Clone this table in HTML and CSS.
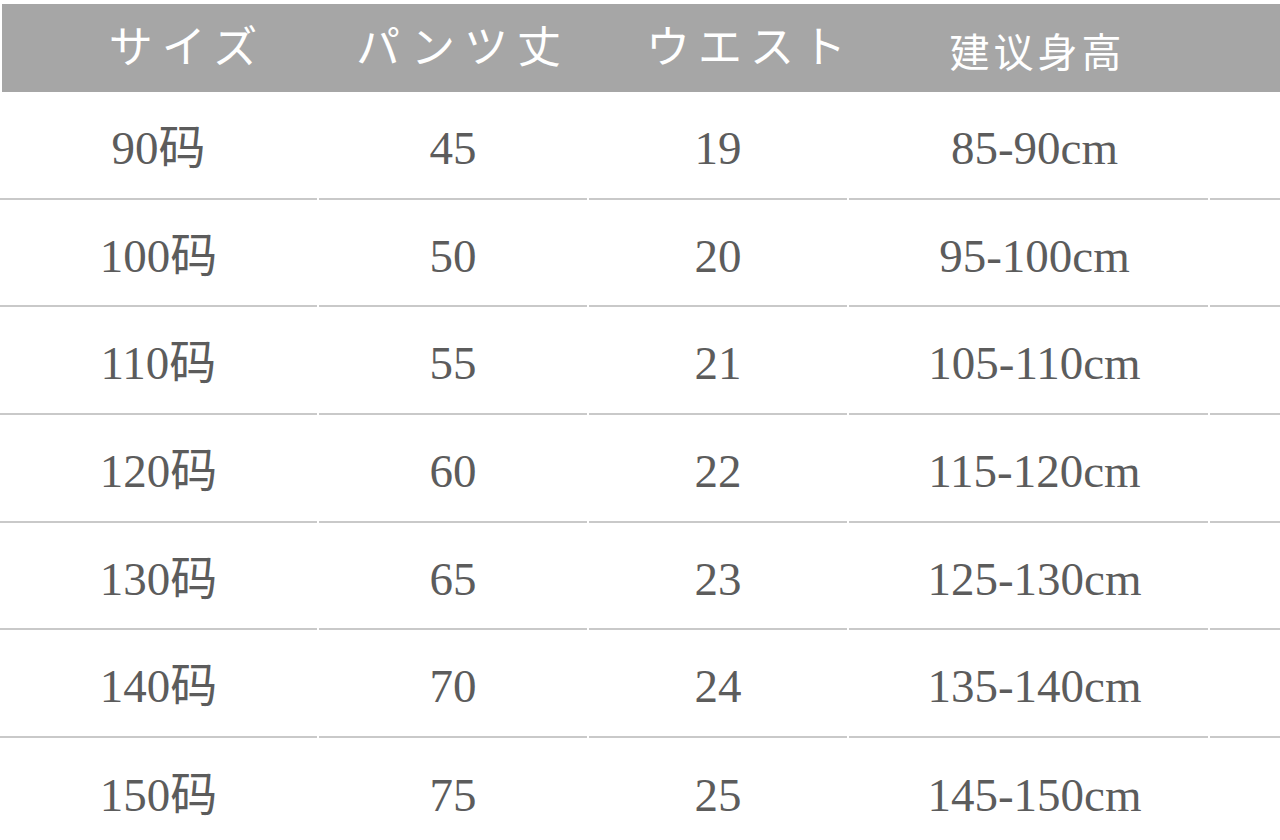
FILE: index.html
```html
<!DOCTYPE html>
<html lang="ja">
<head>
<meta charset="utf-8">
<title>サイズ表</title>
<link rel="stylesheet" href="styles.css">
</head>
<body>
<div class="sheet">
  <div class="head">
    <div class="hcell h-size">サイズ</div>
    <div class="hcell h-len">パンツ丈</div>
    <div class="hcell h-waist">ウエスト</div>
    <div class="hcell h-height">建议身高</div>
    <div class="hcell"></div>
  </div>
  <div class="body">
    <div class="row"><div class="cell">90码</div><div class="cell">45</div><div class="cell">19</div><div class="cell c-h">85-90cm</div><div class="cell"></div></div>
    <div class="row"><div class="cell">100码</div><div class="cell">50</div><div class="cell">20</div><div class="cell c-h">95-100cm</div><div class="cell"></div></div>
    <div class="row"><div class="cell">110码</div><div class="cell">55</div><div class="cell">21</div><div class="cell c-h">105-110cm</div><div class="cell"></div></div>
    <div class="row"><div class="cell">120码</div><div class="cell">60</div><div class="cell">22</div><div class="cell c-h">115-120cm</div><div class="cell"></div></div>
    <div class="row"><div class="cell">130码</div><div class="cell">65</div><div class="cell">23</div><div class="cell c-h">125-130cm</div><div class="cell"></div></div>
    <div class="row"><div class="cell">140码</div><div class="cell">70</div><div class="cell">24</div><div class="cell c-h">135-140cm</div><div class="cell"></div></div>
    <div class="row last"><div class="cell">150码</div><div class="cell">75</div><div class="cell">25</div><div class="cell c-h">145-150cm</div><div class="cell"></div></div>
  </div>
</div>
</body>
</html>
```
FILE: styles.css
```css
html, body {
  margin: 0;
  padding: 0;
  background: #ffffff;
}

body {
  width: 1280px;
  height: 840px;
  overflow: hidden;
}

.sheet {
  display: flex;
  flex-direction: column;
  padding-top: 4px;
}

.head {
  display: grid;
  grid-template-columns: 317px 268px 258px 359px 1fr;
  column-gap: 2px;
  height: 88px;
  margin-left: 2px;
  background: #a6a6a6;
  color: #ffffff;
  font-family: "Noto Sans CJK JP", "Noto Sans CJK SC", sans-serif;
  font-weight: 400;
}

.hcell {
  display: flex;
  align-items: center;
  justify-content: center;
  font-size: 44px;
  line-height: 1;
  white-space: nowrap;
}

.h-size {
  letter-spacing: 9px;
  padding-left: 54px;
  padding-bottom: 8px;
}

.h-len {
  letter-spacing: 9px;
  padding-left: 16px;
  padding-bottom: 8px;
}

.h-waist {
  letter-spacing: 8px;
  padding-left: 60px;
  padding-bottom: 8px;
}

.h-height {
  font-size: 40px;
  letter-spacing: 4px;
  padding-left: 14px;
  padding-top: 4px;
}

.body {
  display: flex;
  flex-direction: column;
}

.row {
  display: grid;
  grid-template-columns: 317px 268px 258px 359px 1fr;
  column-gap: 2px;
  height: 107.7px;
}

.cell {
  box-sizing: border-box;
  display: flex;
  align-items: center;
  justify-content: center;
  padding-top: 7px;
  border-bottom: 2px solid #c9c9c9;
  font-family: "Liberation Serif", "Noto Sans CJK SC", serif;
  font-size: 47px;
  line-height: 1;
  color: #5c5c5c;
  white-space: nowrap;
}

.c-h {
  padding-left: 12px;
}

.row.last .cell {
  border-bottom: none;
}
```
